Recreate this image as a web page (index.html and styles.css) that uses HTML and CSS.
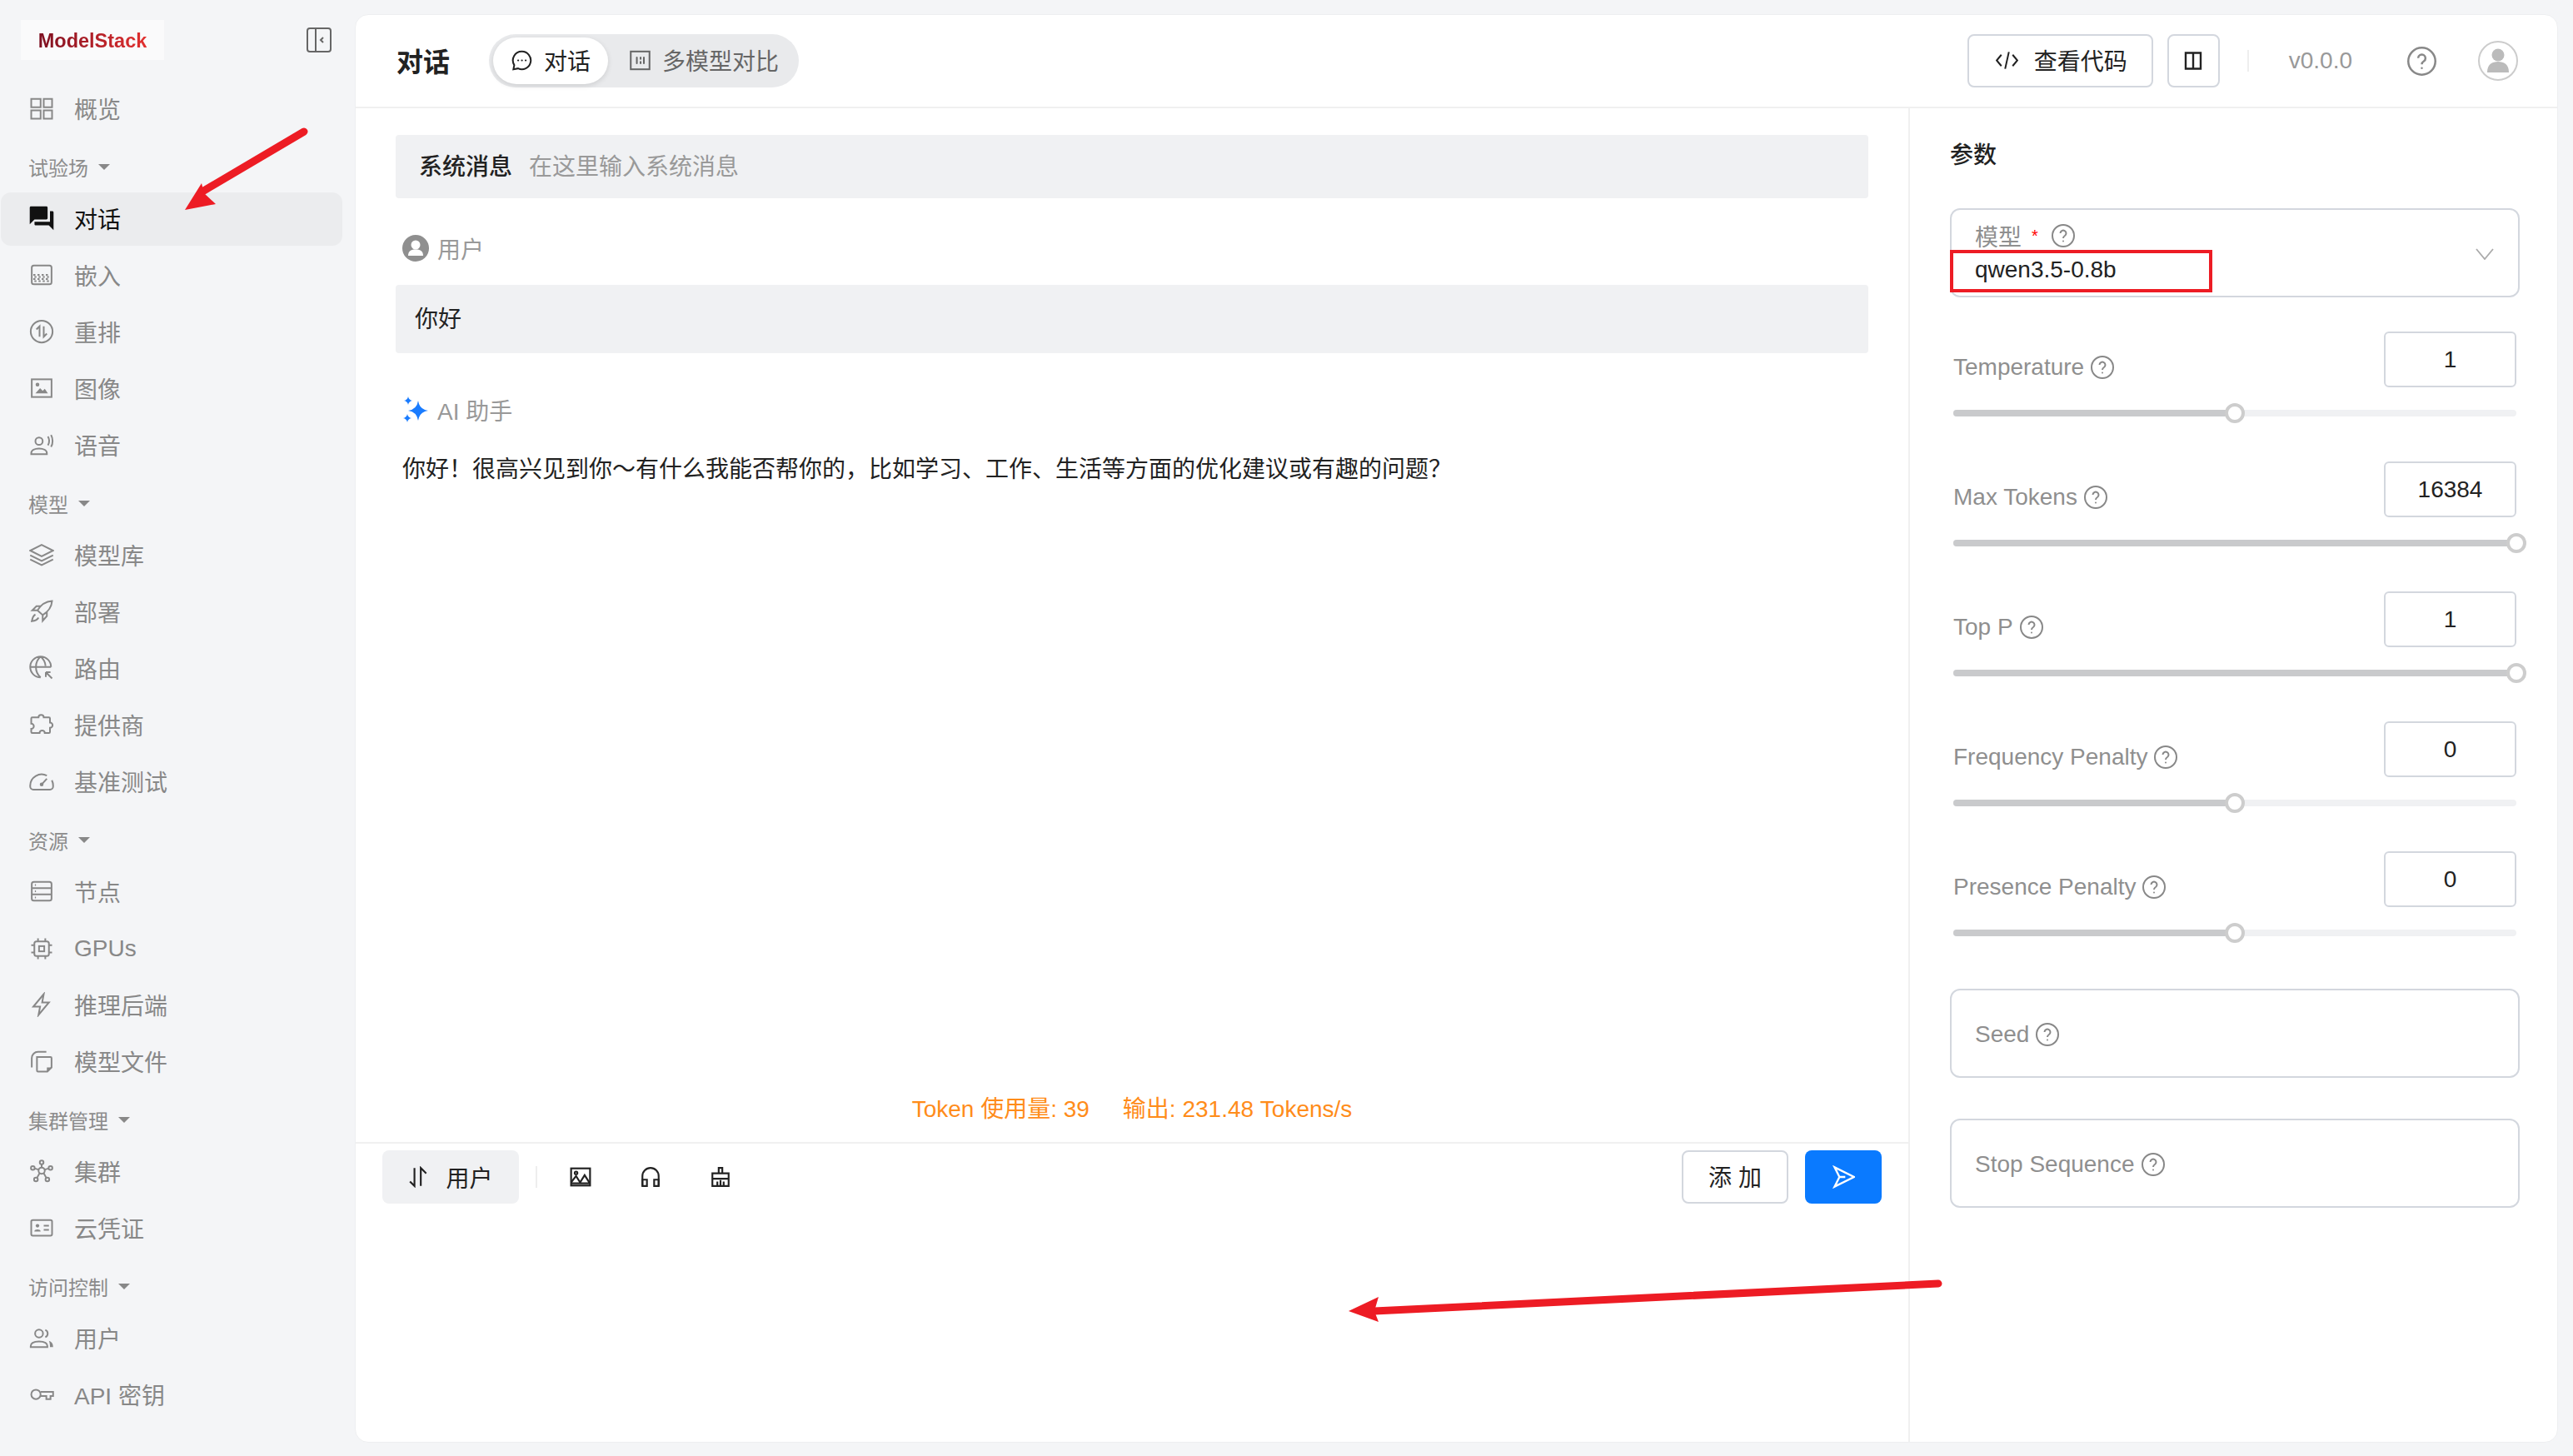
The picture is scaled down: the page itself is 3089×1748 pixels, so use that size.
FILE: index.html
```html
<!DOCTYPE html>
<html lang="zh-CN">
<head>
    <meta charset="UTF-8">
    <title>ModelStack 对话</title>
    <link rel="stylesheet" href="styles.css">
</head>
<body>
    <svg class="defs" width="0" height="0">
        <symbol id="help" viewBox="0 0 28 28">
            <circle cx="14" cy="14" r="13"/>
            <path d="M10.5 11a3.5 3.5 0 1 1 5.4 3c-1.3.8-1.9 1.500-1.900 3"/>
            <circle class="dot" cx="14" cy="20.500" r="1"/>
        </symbol>
    </svg>

    <aside class="sidebar">
        <div class="brand">
            <div class="logo"><span>ModelStack</span></div>
            <svg class="collapse" viewBox="0 0 30 30"><rect x="1" y="1" width="28" height="28" rx="3"/><path d="M11 1v28M20 12l-3 3 3 3"/></svg>
        </div>
        <nav class="nav">
            <a class="nav-item"><svg class="ico" viewBox="0 0 24 24"><path d="M2 3h9v8H2zM14 3h8v8h-8zM2 14h9v8H2zM14 14h8v8h-8z"/></svg>概览</a>

            <div class="nav-group">试验场<i class="caret"></i></div>
            <a class="nav-item active"><svg class="ico solid" viewBox="1.500 1.500 21 21"><path d="M21 6h-2v9H6v2c0 .55.45 1 1 1h11l4 4V7c0-.55-.45-1-1-1zm-4 6V3c0-.55-.45-1-1-1H3c-.55 0-1 .45-1 1v14l4-4h10c.55 0 1-.45 1-1z"/></svg>对话</a>
            <a class="nav-item"><svg class="ico" viewBox="0 0 24 24"><rect x="2.500" y="3" width="19" height="18" rx="2"/><path stroke-dasharray="2 2" d="M4 12h16M5 14h14M4 16h16M5 18h14"/></svg>嵌入</a>
            <a class="nav-item"><svg class="ico" viewBox="0 0 24 24"><circle cx="12" cy="12" r="10.500"/><path d="M10 17V7L7 10M14 7v10l3-3"/></svg>重排</a>
            <a class="nav-item"><svg class="ico" viewBox="0 0 24 24"><rect x="2.500" y="3.500" width="19" height="17"/><circle cx="8" cy="8.500" r="1"/><path class="dot" d="M6 17l4.500-5 2.500 2.500 2-2 3 4.500z"/></svg>图像</a>
            <a class="nav-item"><svg class="ico" viewBox="0 0 24 24"><circle cx="9.500" cy="8.500" r="3.500"/><path d="M2 21v-1c0-3 3.500-4.500 7.500-4.500s7.500 1.500 7.500 4.500v1zM18 4c1.500 2.500 1.500 6 0 8.500M21 2.500c2 3.500 2 8.500 0 11.500"/></svg>语音</a>

            <div class="nav-group">模型<i class="caret"></i></div>
            <a class="nav-item"><svg class="ico" viewBox="0 0 24 24"><path d="M12 2.500L23 8l-11 5.500L1 8zM1 12.500L12 18l11-5.500M1 16.500L12 22l11-5.500"/></svg>模型库</a>
            <a class="nav-item"><svg class="ico" viewBox="0 0 24 24"><path d="M22 2c-7 .5-11 4-14 9l5 4.500c5-3 8.500-7 9-13.500zM8 11H3l4-4h4.500M13 15.500V21l4-4.500V12M6 15c-2 1-3 3.500-3.500 6.500C6 21 8 20 9 18"/></svg>部署</a>
            <a class="nav-item"><svg class="ico" viewBox="0 0 24 24"><path d="M21 11a10 10 0 1 0-10 10M1 11h20M11 1c-6 5-6 15 0 20M11 1c3 2.500 4.500 6 4.700 9M16 16l6 6M16 16h4.500M16 16v4.500"/></svg>路由</a>
            <a class="nav-item"><svg class="ico" viewBox="0 0 24 24"><path d="M9 5a2.500 2.500 0 0 1 5 0h5a1 1 0 0 1 1 1v4a2.500 2.500 0 0 1 0 5v4a1 1 0 0 1-1 1h-4a2.500 2.500 0 0 0-5 0H3a1 1 0 0 1-1-1v-3a2.500 2.500 0 0 0 0-5V6a1 1 0 0 1 1-1z"/></svg>提供商</a>
            <a class="nav-item"><svg class="ico" viewBox="0 0 24 24"><path d="M17 6.500A11 11 0 0 0 1 16v1a3 3 0 0 0 3 3h16a3 3 0 0 0 3-3v-1a11 11 0 0 0-1.200-5"/><path d="M17 9.500l-4.500 5"/><circle class="dot" cx="12" cy="15" r="1.800"/></svg>基准测试</a>

            <div class="nav-group">资源<i class="caret"></i></div>
            <a class="nav-item"><svg class="ico" viewBox="0 0 24 24"><rect x="2.500" y="3" width="19" height="18" rx="2"/><path d="M2.500 9h19M2.500 15h19M5.500 6h1M5.500 12h1M5.500 18h1"/></svg>节点</a>
            <a class="nav-item latin"><svg class="ico" viewBox="0 0 24 24"><rect x="5" y="5" width="14" height="14" rx="2"/><rect x="9.500" y="9.500" width="5" height="5"/><path d="M8.500 2v3M15.500 2v3M8.500 19v3M15.500 19v3M2 8.500h3M2 15.500h3M19 8.500h3M19 15.500h3"/></svg>GPUs</a>
            <a class="nav-item"><svg class="ico" viewBox="0 0 24 24"><path d="M14 2L4 14h6.500L9 22l10-12h-6.500z"/></svg>推理后端</a>
            <a class="nav-item"><svg class="ico" viewBox="0 0 24 24"><path d="M2.500 18V9a6 6 0 0 1 6-6h8"/><path d="M7.500 8h13a1 1 0 0 1 1 1v9l-4 4h-9a1 1 0 0 1-1-1z"/><path class="dot" d="M17 22v-4h4.500z"/></svg>模型文件</a>

            <div class="nav-group">集群管理<i class="caret"></i></div>
            <a class="nav-item"><svg class="ico" viewBox="0 0 24 24"><circle cx="12" cy="11.500" r="3"/><circle cx="12" cy="3.500" r="1.800"/><circle cx="3.500" cy="9" r="1.800"/><circle cx="20.500" cy="9" r="1.800"/><circle cx="6.500" cy="20" r="1.800"/><circle cx="17.500" cy="20" r="1.800"/><path d="M12 5.500v3M5.500 9.500l3.500 1M18.500 9.500l-3.500 1M7.500 18.500l2.500-4.500M16.500 18.500L14 14"/></svg>集群</a>
            <a class="nav-item"><svg class="ico" viewBox="0 0 24 24"><rect x="2" y="4.500" width="20" height="15" rx="1.500"/><circle class="dot" cx="8" cy="10" r="1.700"/><path class="dot" d="M5 15.500c0-2.500 6-2.500 6 0z"/><path d="M14 10h5M14 14h5"/></svg>云凭证</a>

            <div class="nav-group">访问控制<i class="caret"></i></div>
            <a class="nav-item"><svg class="ico" viewBox="0 0 24 24"><circle cx="9.500" cy="8" r="3.800"/><path d="M1.500 21v-1c0-3 3.500-4.500 8-4.500s8 1.500 8 4.500v1zM15.500 4.500a3.800 3.800 0 0 1 0 7"/><path class="dot" d="M19 15c2.500.8 4 2.500 4 6h-3c0-2.500-.300-4.500-1-6z"/></svg>用户</a>
            <a class="nav-item"><svg class="ico" viewBox="0 0 24 24"><circle cx="6.500" cy="12" r="4.500"/><path d="M11 9.500h12v4h-2.500v3h-4v-3H11"/></svg>API 密钥</a>
        </nav>
    </aside>

    <main class="main">
        <header class="topbar">
            <div class="title">对话</div>
            <div class="segment">
                <div class="seg-item on">
                    <svg class="seg-ico" viewBox="0 0 24 24"><path d="M12 2.500a9.500 9.500 0 1 1-4 18.100l-5 .900.900-4.500A9.500 9.500 0 0 1 12 2.500z"/><path d="M8 12h.2M12 12h.2M16 12h.2"/></svg>
                    对话
                </div>
                <div class="seg-item">
                    <svg class="seg-ico" viewBox="0 0 24 24"><rect x="2" y="2.500" width="20" height="19"/><path d="M8.500 9v6M12.500 9v1.500M12.500 13.500V15M16 9v6"/></svg>
                    多模型对比
                </div>
            </div>
            <div class="top-right">
                <button class="btn code-btn"><svg class="btn-ico" viewBox="0 0 24 24"><path d="M6 6l-5 6 5 6M18 6l5 6-5 6M14 3l-4 18"/></svg>查看代码</button>
                <button class="btn panel-btn"><svg class="btn-ico small" viewBox="0 0 24 24"><path d="M3 2.500h18v19H3zM12 2.500v19"/></svg></button>
                <span class="vline"></span>
                <span class="version">v0.0.0</span>
                <svg class="top-help"><use href="#help"/></svg>
                <svg class="avatar" viewBox="0 0 48 48"><circle class="ring" cx="24" cy="24" r="23"/><circle class="fill" cx="24" cy="17" r="7.500"/><path class="fill" d="M11 38c0-10 6-13 13-13s13 3 13 13z"/></svg>
            </div>
        </header>

        <div class="content">
            <section class="chat">
                <div class="messages">
                    <div class="system-box"><b>系统消息</b><span>在这里输入系统消息</span></div>
                    <div class="role user-role">
                        <svg class="role-ico" viewBox="0 0 32 32"><circle class="user-bg" cx="16" cy="16" r="16"/><circle class="user-fg" cx="16" cy="12" r="5.500"/><path class="user-fg" d="M7 25c0-6 4-7.500 9-7.500s9 1.500 9 7.500z"/></svg>
                        用户
                    </div>
                    <div class="bubble">你好</div>
                    <div class="role ai-role">
                        <svg class="role-ico" viewBox="0 0 32 32"><path class="star" d="M19 5Q20.500 15.500 31 17 20.500 18.500 19 29 17.500 18.500 7 17 17.500 15.500 19 5zM7 0Q7.800 4.200 12 5 7.800 5.800 7 10 6.200 5.800 2 5 6.200 4.200 7 0zM6 21Q6.800 25.200 11 26 6.800 26.800 6 31 5.200 26.800 1 26 5.200 25.200 6 21z"/></svg>
                        AI 助手
                    </div>
                    <div class="answer">你好！很高兴见到你～有什么我能否帮你的，比如学习、工作、生活等方面的优化建议或有趣的问题？</div>
                </div>
                <div class="usage"><span>Token 使用量: 39</span><span>输出: 231.48 Tokens/s</span></div>
                <div class="composer">
                    <div class="tools">
                        <button class="role-btn"><svg class="tool-ico" viewBox="0 0 24 24"><path d="M7 2v20l-5-5M14 22V2l6 6"/></svg>用户</button>
                        <span class="vline"></span>
                        <svg class="tool-ico" viewBox="0 0 24 24"><rect x="1.500" y="2.500" width="21" height="19"/><circle cx="7" cy="7.500" r="1.500"/><path d="M1.500 18l5.500-7 4.500 7 5-8 5.500 8.500M1.500 19h21"/></svg>
                        <svg class="tool-ico" viewBox="0 0 24 24"><path d="M3 22V11a9 9 0 0 1 18 0v11"/><path d="M3 15h5v7H3zM16 15h5v7h-5z"/></svg>
                        <svg class="tool-ico" viewBox="0 0 24 24"><path d="M10 2h4v6h-4zM3 8h18v6H3zM3 14v8h18v-8M8.500 17v5M12 15.500V22M15.500 17v5"/></svg>
                        <div class="actions">
                            <button class="btn add-btn">添 加</button>
                            <button class="send-btn"><svg class="send-ico" viewBox="0 0 24 24"><path d="M3 2l20 10L3 22l5-10zM8 12h6"/></svg></button>
                        </div>
                    </div>
                </div>
            </section>

            <aside class="params">
                <div class="params-title">参数</div>
                <div class="field model-field">
                    <div class="field-label">模型<em>*</em><svg class="help"><use href="#help"/></svg></div>
                    <div class="field-value">qwen3.5-0.8b</div>
                    <svg class="chevron" viewBox="0 0 22 14"><path d="M1 1l10 12L21 1"/></svg>
                </div>

                <div class="param">
                    <div class="param-head"><label>Temperature<svg class="help"><use href="#help"/></svg></label><div class="num">1</div></div>
                    <div class="slider"><div class="fill" style="width: 50%"></div><span class="thumb" style="left: 50%"></span></div>
                </div>
                <div class="param">
                    <div class="param-head"><label>Max Tokens<svg class="help"><use href="#help"/></svg></label><div class="num">16384</div></div>
                    <div class="slider"><div class="fill" style="width: 100%"></div><span class="thumb" style="left: 100%"></span></div>
                </div>
                <div class="param">
                    <div class="param-head"><label>Top P<svg class="help"><use href="#help"/></svg></label><div class="num">1</div></div>
                    <div class="slider"><div class="fill" style="width: 100%"></div><span class="thumb" style="left: 100%"></span></div>
                </div>
                <div class="param">
                    <div class="param-head"><label>Frequency Penalty<svg class="help"><use href="#help"/></svg></label><div class="num">0</div></div>
                    <div class="slider"><div class="fill" style="width: 50%"></div><span class="thumb" style="left: 50%"></span></div>
                </div>
                <div class="param">
                    <div class="param-head"><label>Presence Penalty<svg class="help"><use href="#help"/></svg></label><div class="num">0</div></div>
                    <div class="slider"><div class="fill" style="width: 50%"></div><span class="thumb" style="left: 50%"></span></div>
                </div>

                <div class="field text-field seed-field"><div class="field-label">Seed<svg class="help"><use href="#help"/></svg></div></div>
                <div class="field text-field"><div class="field-label">Stop Sequence<svg class="help"><use href="#help"/></svg></div></div>
            </aside>
        </div>
    </main>

    <!-- 截图上的红色标注 -->
    <svg class="marks" viewBox="0 0 3089 1748">
        <path class="mark-line" d="M365 158L243 230"/>
        <path class="mark-head" d="M222 252L242 220L245 232L259 245z"/>
        <path class="mark-line" d="M2327 1541L1650 1574"/>
        <path class="mark-head" d="M1619 1574L1655 1557L1650 1574L1655 1587z"/>
        <rect class="mark-box" x="2343" y="302" width="311" height="47"/>
    </svg>
</body>
</html>
```

FILE: styles.css
```css
* {
    box-sizing: border-box;
}
body {
    margin: 0;
    height: 100vh;
    display: flex;
    overflow: hidden;
    background-color: #f4f5f7;
    color: #222;
    font-family: "Liberation Sans", "Noto Sans CJK SC", sans-serif;
    font-size: 28px;
}
svg {
    flex-shrink: 0;
}
.defs {
    position: absolute;
}
#help {
    fill: none;
    stroke: currentColor;
    stroke-width: 2;
}
#help .dot {
    fill: currentColor;
    stroke: none;
}

/* 左侧菜单 */
.sidebar {
    width: 426px;
    flex-shrink: 0;
    padding: 24px 15px 0 1px;
}
.brand {
    display: flex;
    align-items: center;
    justify-content: space-between;
    padding: 0 13px 0 24px;
    margin-bottom: 27px;
}
.logo {
    width: 172px;
    height: 48px;
    padding-top: 2px;
    display: flex;
    align-items: center;
    justify-content: center;
    background-color: #fafafb;
    font-size: 23.5px;
    font-weight: bold;
}
.logo span {
    background: linear-gradient(90deg, #7d0f20, #e2302f);
    -webkit-background-clip: text;
    background-clip: text;
    color: transparent;
}
.collapse {
    width: 30px;
    height: 30px;
    fill: none;
    stroke: #666;
    stroke-width: 2;
}
.nav-item {
    height: 64px;
    margin-bottom: 4px;
    padding: 0 0 2px 34px;
    display: flex;
    align-items: center;
    gap: 24px;
    border-radius: 12px;
    color: #888;
}
.nav-item.latin {
    padding-bottom: 0;
}
.nav-item.active {
    background-color: #ebecee;
    color: #111;
}
.nav-group {
    height: 64px;
    padding: 2px 0 0 33px;
    display: flex;
    align-items: center;
    gap: 12px;
    color: #8c8c8c;
    font-size: 24px;
}
.caret {
    width: 0;
    height: 0;
    border-left: 7px solid transparent;
    border-right: 7px solid transparent;
    border-top: 7px solid #888;
}
.ico {
    width: 30px;
    height: 30px;
    fill: none;
    stroke: currentColor;
    stroke-width: 1.600;
}
.ico .dot {
    fill: currentColor;
    stroke: none;
}
.ico.solid {
    fill: currentColor;
    stroke: none;
}

/* 主卡片 */
.main {
    flex: 1;
    margin: 17px 18px 16px 0;
    display: flex;
    flex-direction: column;
    background-color: white;
    border: 1px solid #eeeff1;
    border-radius: 16px;
    min-width: 0;
}
.topbar {
    height: 112px;
    flex-shrink: 0;
    padding: 0 47px 0 49px;
    display: flex;
    align-items: center;
    border-bottom: 2px solid #f0f0f0;
}
.title {
    font-size: 32px;
    font-weight: bold;
    margin-right: 47px;
    padding-bottom: 3px;
}
.segment {
    height: 64px;
    padding: 4px 24px 4px 5px;
    display: flex;
    align-items: center;
    background-color: #e9eaec;
    border-radius: 32px;
}
.seg-item {
    height: 56px;
    display: flex;
    align-items: center;
    gap: 13px;
    padding: 0 0 2px 25px;
    color: #666;
}
.seg-item.on {
    padding: 0 21px 2px 21px;
    background-color: white;
    border-radius: 28px;
    box-shadow: 0 2px 6px rgba(0,0,0,0.12);
    color: #222;
}
.seg-ico {
    width: 27px;
    height: 27px;
    fill: none;
    stroke: currentColor;
    stroke-width: 1.800;
    stroke-linecap: round;
}
.top-right {
    margin-left: auto;
    display: flex;
    align-items: center;
}
.btn {
    height: 64px;
    display: flex;
    align-items: center;
    background-color: white;
    border: 2px solid #d3d7de;
    border-radius: 8px;
    color: #222;
    font: inherit;
}
.code-btn {
    width: 223px;
    padding: 0 0 2px 32px;
    gap: 19px;
    white-space: nowrap;
}
.panel-btn {
    width: 63px;
    padding: 0;
    margin-left: 17px;
    justify-content: center;
}
.btn-ico {
    width: 27px;
    height: 27px;
    fill: none;
    stroke: #222;
    stroke-width: 1.800;
}
.btn-ico.small {
    width: 24px;
    height: 24px;
    stroke-width: 2.400;
}
.vline {
    width: 2px;
    height: 26px;
    background-color: #eee;
}
.top-right .vline {
    margin-left: 33px;
}
.version {
    margin-left: 48px;
    color: #999;
}
.top-help {
    width: 35px;
    height: 35px;
    margin-left: 66px;
    color: #888;
}
.avatar {
    width: 48px;
    height: 48px;
    margin-left: 50px;
}
.avatar .ring {
    fill: white;
    stroke: #ccc;
    stroke-width: 2;
}
.avatar .fill {
    fill: #bbb;
}

.content {
    flex: 1;
    display: flex;
    min-height: 0;
}

/* 对话区 */
.chat {
    flex: 1;
    display: flex;
    flex-direction: column;
    min-width: 0;
}
.messages {
    flex: 1;
    padding: 32px 48px 0 48px;
}
.system-box {
    height: 76px;
    padding: 0 28px 5px;
    display: flex;
    align-items: center;
    gap: 20px;
    background-color: #f0f1f3;
    border-radius: 4px;
}
.system-box b {
    font-weight: 500;
    color: #222;
}
.system-box span {
    color: #999;
}
.role {
    height: 32px;
    padding-left: 8px;
    display: flex;
    align-items: center;
    gap: 10px;
    color: #999;
}
.user-role {
    margin-top: 44px;
}
.ai-role {
    margin-top: 52px;
}
.role-ico {
    width: 32px;
    height: 32px;
}
.user-bg {
    fill: #8f8f8f;
}
.user-fg {
    fill: white;
}
.star {
    fill: #1a7cff;
}
.bubble {
    height: 82px;
    margin-top: 28px;
    padding: 0 23px 4px;
    display: flex;
    align-items: center;
    background-color: #f0f1f3;
    border-radius: 4px;
}
.answer {
    margin-top: 34px;
    padding-left: 8px;
    line-height: 44px;
}
.usage {
    height: 40px;
    margin-bottom: 22px;
    display: flex;
    justify-content: center;
    align-items: center;
    gap: 40px;
    color: #ff8c1a;
}
.composer {
    height: 360px;
    flex-shrink: 0;
    padding: 8px 32px 0 32px;
    border-top: 2px solid #f0f0f0;
}
.tools {
    display: flex;
    align-items: center;
}
.role-btn {
    width: 164px;
    height: 64px;
    margin-right: 20px;
    padding-bottom: 2px;
    display: flex;
    align-items: center;
    justify-content: center;
    gap: 19px;
    background-color: #f0f1f3;
    border: none;
    border-radius: 8px;
    color: #222;
    font: inherit;
}
.tool-ico {
    width: 26px;
    height: 26px;
    fill: none;
    stroke: #222;
    stroke-width: 2;
}
.tools > .tool-ico {
    margin-left: 58px;
}
.tools > .vline + .tool-ico {
    margin-left: 39px;
}
.actions {
    margin-left: auto;
    display: flex;
    gap: 20px;
}
.add-btn {
    width: 128px;
    justify-content: center;
    padding: 0 0 2px;
}
.send-btn {
    width: 92px;
    height: 64px;
    display: flex;
    align-items: center;
    justify-content: center;
    padding: 0;
    background-color: #0a7aff;
    border: none;
    border-radius: 8px;
}
.send-ico {
    width: 28px;
    height: 28px;
    fill: none;
    stroke: white;
    stroke-width: 2;
}

/* 参数面板 */
.params {
    width: 779px;
    flex-shrink: 0;
    padding: 37px 45px 0 48px;
    border-left: 2px solid #f0f0f0;
}
.params-title {
    height: 40px;
    line-height: 40px;
    font-weight: 500;
    margin-bottom: 43px;
}
.field {
    position: relative;
    height: 107px;
    padding: 0 28px;
    border: 2px solid #d3d7de;
    border-radius: 12px;
}
.field-label {
    display: flex;
    align-items: center;
    color: #8f8f8f;
}
.field-label em {
    margin: 0 16px 0 12px;
    color: #f00;
    font-style: normal;
    font-size: 20px;
}
.help {
    width: 28px;
    height: 28px;
    margin-left: 8px;
    color: #888;
}
.field-label em + .help {
    margin-left: 0;
}
.model-field .field-label {
    height: 36px;
    margin-top: 13px;
}
.field-value {
    height: 36px;
    line-height: 36px;
    margin-top: 5px;
    color: #222;
}
.chevron {
    position: absolute;
    right: 29px;
    top: 46px;
    width: 22px;
    height: 14px;
    fill: none;
    stroke: #aaa;
    stroke-width: 1.800;
}
.param {
    padding: 0 4px;
}
.model-field + .param {
    margin-top: 41px;
}
.param-head {
    height: 67px;
    display: flex;
    justify-content: space-between;
    align-items: center;
}
.param-head label {
    display: flex;
    align-items: center;
    padding-top: 18px;
    color: #8f8f8f;
}
.num {
    width: 159px;
    height: 67px;
    display: flex;
    align-items: center;
    justify-content: center;
    border: 2px solid #d3d7de;
    border-radius: 6px;
    color: #222;
}
.slider {
    position: relative;
    height: 8px;
    margin: 27px 0 54px;
    background-color: #f0f1f3;
    border-radius: 4px;
}
.fill {
    height: 8px;
    background-color: #c9cacc;
    border-radius: 4px;
}
.thumb {
    position: absolute;
    top: -8px;
    width: 24px;
    height: 24px;
    margin-left: -12px;
    background-color: white;
    border: 4px solid #cdcdcd;
    border-radius: 50%;
}
.text-field {
    display: flex;
    align-items: center;
    padding-top: 3px;
}
.seed-field {
    margin-top: 63px;
    margin-bottom: 49px;
}

/* 标注 */
.marks {
    position: absolute;
    left: 0;
    top: 0;
    width: 3089px;
    height: 1748px;
    pointer-events: none;
}
.mark-line {
    fill: none;
    stroke: #ed1c24;
    stroke-width: 9;
    stroke-linecap: round;
}
.mark-head {
    fill: #ed1c24;
}
.mark-box {
    fill: none;
    stroke: #ed1c24;
    stroke-width: 4;
}
```
